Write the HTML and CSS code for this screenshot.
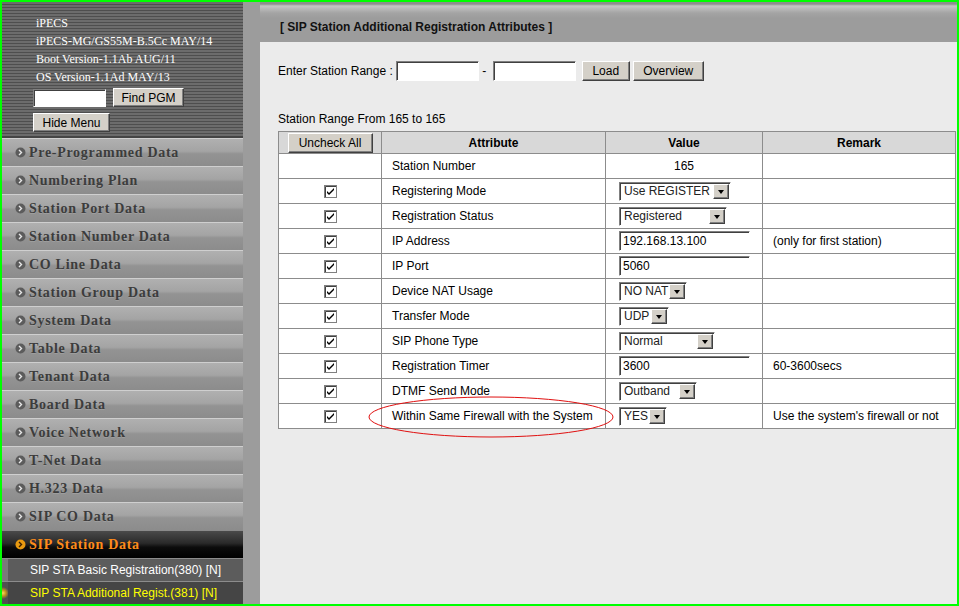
FILE: index.html
```html
<!DOCTYPE html>
<html>
<head>
<meta charset="utf-8">
<link rel="stylesheet" href="styles.css">
</head>
<body>
<div class="screen">
  <aside class="sidebar">
    <div class="info">
      <div class="info-line">iPECS</div>
      <div class="info-line">iPECS-MG/GS55M-B.5Cc MAY/14</div>
      <div class="info-line">Boot Version-1.1Ab AUG/11</div>
      <div class="info-line">OS Version-1.1Ad MAY/13</div>
      <div class="find-row">
        <input class="win-input find-input" type="text">
        <button class="win-btn find-btn">Find PGM</button>
      </div>
      <div class="hide-row">
        <button class="win-btn hide-btn">Hide Menu</button>
      </div>
    </div>
    <nav class="menu">
      <div class="menu-item"><svg class="bullet" viewBox="0 0 11 11"><circle cx="5.5" cy="5.5" r="5" fill="#5c5c5c"/><polyline points="4,3 6.5,5.5 4,8" fill="none" stroke="#e8e8e8" stroke-width="1.4"/></svg>Pre-Programmed Data</div>
      <div class="menu-item"><svg class="bullet" viewBox="0 0 11 11"><circle cx="5.5" cy="5.5" r="5" fill="#5c5c5c"/><polyline points="4,3 6.5,5.5 4,8" fill="none" stroke="#e8e8e8" stroke-width="1.4"/></svg>Numbering Plan</div>
      <div class="menu-item"><svg class="bullet" viewBox="0 0 11 11"><circle cx="5.5" cy="5.5" r="5" fill="#5c5c5c"/><polyline points="4,3 6.5,5.5 4,8" fill="none" stroke="#e8e8e8" stroke-width="1.4"/></svg>Station Port Data</div>
      <div class="menu-item"><svg class="bullet" viewBox="0 0 11 11"><circle cx="5.5" cy="5.5" r="5" fill="#5c5c5c"/><polyline points="4,3 6.5,5.5 4,8" fill="none" stroke="#e8e8e8" stroke-width="1.4"/></svg>Station Number Data</div>
      <div class="menu-item"><svg class="bullet" viewBox="0 0 11 11"><circle cx="5.5" cy="5.5" r="5" fill="#5c5c5c"/><polyline points="4,3 6.5,5.5 4,8" fill="none" stroke="#e8e8e8" stroke-width="1.4"/></svg>CO Line Data</div>
      <div class="menu-item"><svg class="bullet" viewBox="0 0 11 11"><circle cx="5.5" cy="5.5" r="5" fill="#5c5c5c"/><polyline points="4,3 6.5,5.5 4,8" fill="none" stroke="#e8e8e8" stroke-width="1.4"/></svg>Station Group Data</div>
      <div class="menu-item"><svg class="bullet" viewBox="0 0 11 11"><circle cx="5.5" cy="5.5" r="5" fill="#5c5c5c"/><polyline points="4,3 6.5,5.5 4,8" fill="none" stroke="#e8e8e8" stroke-width="1.4"/></svg>System Data</div>
      <div class="menu-item"><svg class="bullet" viewBox="0 0 11 11"><circle cx="5.5" cy="5.5" r="5" fill="#5c5c5c"/><polyline points="4,3 6.5,5.5 4,8" fill="none" stroke="#e8e8e8" stroke-width="1.4"/></svg>Table Data</div>
      <div class="menu-item"><svg class="bullet" viewBox="0 0 11 11"><circle cx="5.5" cy="5.5" r="5" fill="#5c5c5c"/><polyline points="4,3 6.5,5.5 4,8" fill="none" stroke="#e8e8e8" stroke-width="1.4"/></svg>Tenant Data</div>
      <div class="menu-item"><svg class="bullet" viewBox="0 0 11 11"><circle cx="5.5" cy="5.5" r="5" fill="#5c5c5c"/><polyline points="4,3 6.5,5.5 4,8" fill="none" stroke="#e8e8e8" stroke-width="1.4"/></svg>Board Data</div>
      <div class="menu-item"><svg class="bullet" viewBox="0 0 11 11"><circle cx="5.5" cy="5.5" r="5" fill="#5c5c5c"/><polyline points="4,3 6.5,5.5 4,8" fill="none" stroke="#e8e8e8" stroke-width="1.4"/></svg>Voice Network</div>
      <div class="menu-item"><svg class="bullet" viewBox="0 0 11 11"><circle cx="5.5" cy="5.5" r="5" fill="#5c5c5c"/><polyline points="4,3 6.5,5.5 4,8" fill="none" stroke="#e8e8e8" stroke-width="1.4"/></svg>T-Net Data</div>
      <div class="menu-item"><svg class="bullet" viewBox="0 0 11 11"><circle cx="5.5" cy="5.5" r="5" fill="#5c5c5c"/><polyline points="4,3 6.5,5.5 4,8" fill="none" stroke="#e8e8e8" stroke-width="1.4"/></svg>H.323 Data</div>
      <div class="menu-item"><svg class="bullet" viewBox="0 0 11 11"><circle cx="5.5" cy="5.5" r="5" fill="#5c5c5c"/><polyline points="4,3 6.5,5.5 4,8" fill="none" stroke="#e8e8e8" stroke-width="1.4"/></svg>SIP CO Data</div>
      <div class="menu-item active"><svg class="bullet" viewBox="0 0 11 11"><circle cx="5.5" cy="5.5" r="5" fill="#e89a10"/><polyline points="4,3 6.5,5.5 4,8" fill="none" stroke="#3a2000" stroke-width="1.4"/></svg>SIP Station Data</div>
      <div class="sub-item"><span class="sub-mark"></span><span class="sub-label">SIP STA Basic Registration(380) [N]</span></div>
      <div class="sub-item current"><span class="sub-mark"></span><span class="sub-label">SIP STA Additional Regist.(381) [N]</span></div>
    </nav>
  </aside>
  <div class="gutter"></div>
  <main class="main">
    <div class="titlebar">[ SIP Station Additional Registration Attributes ]</div>
    <div class="content">
      <div class="range-row">
        <span>Enter Station Range :</span>
        <input class="win-input range-input" type="text">
        <span class="dash">-</span>
        <input class="win-input range-input" type="text">
        <button class="win-btn load-btn">Load</button>
        <button class="win-btn overview-btn">Overview</button>
      </div>
      <div class="range-info">Station Range From 165 to 165</div>
      <table class="attr-table">
        <colgroup>
          <col class="c1"><col class="c2"><col class="c3"><col class="c4">
        </colgroup>
        <thead>
          <tr>
            <th><button class="win-btn uncheck-btn">Uncheck All</button></th>
            <th>Attribute</th>
            <th>Value</th>
            <th>Remark</th>
          </tr>
        </thead>
        <tbody>
          <tr>
            <td></td>
            <td class="attr">Station Number</td>
            <td class="val center">165</td>
            <td class="rem"></td>
          </tr>
          <tr>
            <td class="chk"><span class="cb"><svg viewBox="0 0 13 13"><rect x="0.5" y="0.5" width="12" height="12" fill="#fff" stroke="#808080"/><path d="M1.5 12V1.5H12" fill="none" stroke="#404040"/><path d="M3 6l2 2 5-5v2l-5 5-2-2z" fill="#000"/></svg></span></td>
            <td class="attr">Registering Mode</td>
            <td class="val"><span class="sel w112"><span class="sel-text">Use REGISTER</span><span class="sel-btn"></span></span></td>
            <td class="rem"></td>
          </tr>
          <tr>
            <td class="chk"><span class="cb"><svg viewBox="0 0 13 13"><rect x="0.5" y="0.5" width="12" height="12" fill="#fff" stroke="#808080"/><path d="M1.5 12V1.5H12" fill="none" stroke="#404040"/><path d="M3 6l2 2 5-5v2l-5 5-2-2z" fill="#000"/></svg></span></td>
            <td class="attr">Registration Status</td>
            <td class="val"><span class="sel w108"><span class="sel-text">Registered</span><span class="sel-btn"></span></span></td>
            <td class="rem"></td>
          </tr>
          <tr>
            <td class="chk"><span class="cb"><svg viewBox="0 0 13 13"><rect x="0.5" y="0.5" width="12" height="12" fill="#fff" stroke="#808080"/><path d="M1.5 12V1.5H12" fill="none" stroke="#404040"/><path d="M3 6l2 2 5-5v2l-5 5-2-2z" fill="#000"/></svg></span></td>
            <td class="attr">IP Address</td>
            <td class="val"><input class="win-input val-input" type="text" value="192.168.13.100"></td>
            <td class="rem">(only for first station)</td>
          </tr>
          <tr>
            <td class="chk"><span class="cb"><svg viewBox="0 0 13 13"><rect x="0.5" y="0.5" width="12" height="12" fill="#fff" stroke="#808080"/><path d="M1.5 12V1.5H12" fill="none" stroke="#404040"/><path d="M3 6l2 2 5-5v2l-5 5-2-2z" fill="#000"/></svg></span></td>
            <td class="attr">IP Port</td>
            <td class="val"><input class="win-input val-input" type="text" value="5060"></td>
            <td class="rem"></td>
          </tr>
          <tr>
            <td class="chk"><span class="cb"><svg viewBox="0 0 13 13"><rect x="0.5" y="0.5" width="12" height="12" fill="#fff" stroke="#808080"/><path d="M1.5 12V1.5H12" fill="none" stroke="#404040"/><path d="M3 6l2 2 5-5v2l-5 5-2-2z" fill="#000"/></svg></span></td>
            <td class="attr">Device NAT Usage</td>
            <td class="val"><span class="sel w68"><span class="sel-text">NO NAT</span><span class="sel-btn"></span></span></td>
            <td class="rem"></td>
          </tr>
          <tr>
            <td class="chk"><span class="cb"><svg viewBox="0 0 13 13"><rect x="0.5" y="0.5" width="12" height="12" fill="#fff" stroke="#808080"/><path d="M1.5 12V1.5H12" fill="none" stroke="#404040"/><path d="M3 6l2 2 5-5v2l-5 5-2-2z" fill="#000"/></svg></span></td>
            <td class="attr">Transfer Mode</td>
            <td class="val"><span class="sel w50"><span class="sel-text">UDP</span><span class="sel-btn"></span></span></td>
            <td class="rem"></td>
          </tr>
          <tr>
            <td class="chk"><span class="cb"><svg viewBox="0 0 13 13"><rect x="0.5" y="0.5" width="12" height="12" fill="#fff" stroke="#808080"/><path d="M1.5 12V1.5H12" fill="none" stroke="#404040"/><path d="M3 6l2 2 5-5v2l-5 5-2-2z" fill="#000"/></svg></span></td>
            <td class="attr">SIP Phone Type</td>
            <td class="val"><span class="sel w96"><span class="sel-text">Normal</span><span class="sel-btn"></span></span></td>
            <td class="rem"></td>
          </tr>
          <tr>
            <td class="chk"><span class="cb"><svg viewBox="0 0 13 13"><rect x="0.5" y="0.5" width="12" height="12" fill="#fff" stroke="#808080"/><path d="M1.5 12V1.5H12" fill="none" stroke="#404040"/><path d="M3 6l2 2 5-5v2l-5 5-2-2z" fill="#000"/></svg></span></td>
            <td class="attr">Registration Timer</td>
            <td class="val"><input class="win-input val-input" type="text" value="3600"></td>
            <td class="rem">60-3600secs</td>
          </tr>
          <tr>
            <td class="chk"><span class="cb"><svg viewBox="0 0 13 13"><rect x="0.5" y="0.5" width="12" height="12" fill="#fff" stroke="#808080"/><path d="M1.5 12V1.5H12" fill="none" stroke="#404040"/><path d="M3 6l2 2 5-5v2l-5 5-2-2z" fill="#000"/></svg></span></td>
            <td class="attr">DTMF Send Mode</td>
            <td class="val"><span class="sel w78"><span class="sel-text">Outband</span><span class="sel-btn"></span></span></td>
            <td class="rem"></td>
          </tr>
          <tr>
            <td class="chk"><span class="cb"><svg viewBox="0 0 13 13"><rect x="0.5" y="0.5" width="12" height="12" fill="#fff" stroke="#808080"/><path d="M1.5 12V1.5H12" fill="none" stroke="#404040"/><path d="M3 6l2 2 5-5v2l-5 5-2-2z" fill="#000"/></svg></span></td>
            <td class="attr circled">Within Same Firewall with the System<svg class="ellipse" viewBox="0 0 246 42"><ellipse cx="123" cy="21" rx="122" ry="20" fill="none" stroke="#e01010" stroke-width="1"/></svg></td>
            <td class="val"><span class="sel w48"><span class="sel-text">YES</span><span class="sel-btn"></span></span></td>
            <td class="rem">Use the system's firewall or not</td>
          </tr>
        </tbody>
      </table>
    </div>
  </main>
</div>
</body>
</html>
```

FILE: styles.css
```css
html, body {
  margin: 0;
  padding: 0;
  background: #ebebeb;
}

.screen {
  box-sizing: border-box;
  width: 959px;
  height: 606px;
  border: 2px solid #00ff00;
  display: flex;
  overflow: hidden;
  font-family: "Liberation Sans", Arial, sans-serif;
  font-size: 12px;
  color: #000;
}

/* ---------- Sidebar ---------- */
.sidebar {
  width: 241px;
  flex: none;
  display: flex;
  flex-direction: column;
  background: #3e3e3e;
}

.info {
  box-sizing: border-box;
  height: 136px;
  padding: 12px 0 0 31px;
  background: repeating-linear-gradient(to bottom, #6c6c6c 0, #6c6c6c 2px, #4e4e4e 2px, #4e4e4e 3px);
  border-bottom: 2px solid #454545;
  font-family: "Liberation Serif", "Times New Roman", serif;
  color: #fff;
}

.info-line {
  font-size: 12px;
  line-height: 18px;
  padding-left: 3px;
  white-space: nowrap;
}

.find-row {
  display: flex;
  align-items: center;
  gap: 7px;
  margin-top: 2px;
}

.hide-row {
  margin-top: 6px;
}

.win-btn {
  box-sizing: border-box;
  margin: 0;
  padding: 0;
  background: #d4d0c8;
  border: 1px solid;
  border-color: #ffffff #404040 #404040 #ffffff;
  box-shadow: inset -1px -1px 0 #808080;
  font-family: "Liberation Sans", Arial, sans-serif;
  font-size: 12px;
  color: #000;
  line-height: 1;
}

.win-input {
  box-sizing: border-box;
  margin: 0;
  padding: 0 3px;
  background: #fff;
  border: 1px solid;
  border-color: #808080 #ffffff #ffffff #808080;
  box-shadow: inset 1px 1px 0 #404040;
  font-family: "Liberation Sans", Arial, sans-serif;
  font-size: 12px;
  color: #000;
  outline: none;
}

.find-input {
  width: 73px;
  height: 18px;
}

.find-btn {
  width: 71px;
  height: 19px;
}

.hide-btn {
  width: 77px;
  height: 19px;
}

.menu {
  display: flex;
  flex-direction: column;
}

.menu-item {
  box-sizing: border-box;
  height: 28px;
  display: flex;
  align-items: center;
  padding-left: 13px;
  padding-top: 1px;
  border-top: 1px solid #cfcfcf;
  background: linear-gradient(to bottom, #b0b0b0 0%, #a4a4a4 45%, #939393 55%, #8c8c8c 100%);
  font-family: "Liberation Serif", "Times New Roman", serif;
  font-weight: bold;
  font-size: 14px;
  letter-spacing: 0.7px;
  color: #3c3c3c;
  text-shadow: 0 1px 0 rgba(255, 255, 255, 0.15);
  white-space: nowrap;
}

.bullet {
  width: 11px;
  height: 11px;
  margin-right: 3px;
  margin-top: -2px;
  flex: none;
}

.menu-item.active {
  border-top: 1px solid #8a8a8a;
  background: linear-gradient(to bottom, #4a4a4a 0%, #2a2a2a 45%, #0c0c0c 60%, #000 100%);
  color: #ff8c1a;
  text-shadow: none;
}

.sub-item {
  box-sizing: border-box;
  height: 23px;
  display: flex;
  border-top: 1px solid #8c8c8c;
  white-space: nowrap;
}

.sub-mark {
  width: 6px;
  flex: none;
  background: #7a7a7a;
}

.sub-label {
  flex: 1;
  display: flex;
  align-items: center;
  padding-left: 22px;
  background: #5c5c5c;
  color: #ffffff;
  font-size: 12px;
}

.sub-item.current .sub-mark {
  background: radial-gradient(circle at 1px 50%, #f4d860 0, #c09020 3px, #505050 6px);
}

.sub-item.current .sub-label {
  background: #454545;
  color: #ffff00;
}

.gutter {
  width: 17px;
  flex: none;
  background: #9c9c9c;
}

/* ---------- Main ---------- */
.main {
  flex: 1;
  display: flex;
  flex-direction: column;
  background: #ebebeb;
}

.titlebar {
  box-sizing: border-box;
  height: 40px;
  padding: 16px 0 0 20px;
  line-height: 18px;
  font-weight: bold;
  font-size: 12px;
  color: #111;
  background: linear-gradient(to bottom, #8e8e8e 0, #8e8e8e 2px, #c6c6c6 4px, #a4a4a4 11px, #9c9c9c 16px, #9c9c9c 100%);
}

.content {
  padding: 19px 0 0 18px;
}

.range-row {
  display: flex;
  align-items: center;
  height: 20px;
}

.range-input {
  width: 83px;
  height: 20px;
  margin-left: 3px;
}

.dash {
  width: 11px;
  text-align: center;
}

.load-btn {
  width: 48px;
  height: 20px;
  margin-left: 6px;
}

.overview-btn {
  width: 71px;
  height: 20px;
  margin-left: 3px;
}

.range-info {
  margin-top: 31px;
  line-height: 14px;
}

.attr-table {
  margin-top: 5px;
  width: 677px;
  border-collapse: collapse;
  table-layout: fixed;
  background: #fff;
}

.c1 { width: 103px; }
.c2 { width: 224px; }
.c3 { width: 157px; }
.c4 { width: 193px; }

.attr-table th,
.attr-table td {
  border: 1px solid #8c8c8c;
  padding: 0;
  font-size: 12px;
  line-height: 14px;
  white-space: nowrap;
  vertical-align: middle;
}

.attr-table th {
  height: 21px;
  background: #d8d8d8;
  font-weight: bold;
  text-align: center;
}

.attr-table td {
  height: 24px;
}

.uncheck-btn {
  width: 85px;
  height: 20px;
  display: block;
  margin: 0 auto;
}

.chk {
  text-align: center;
}

.cb {
  display: inline-block;
  width: 13px;
  height: 13px;
  vertical-align: middle;
}

.cb svg {
  display: block;
  width: 13px;
  height: 13px;
}

.attr {
  padding-left: 10px !important;
}

.circled {
  position: relative;
}

.ellipse {
  position: absolute;
  left: -14px;
  top: -8px;
  width: 246px;
  height: 42px;
  pointer-events: none;
}

.val {
  padding-left: 13px !important;
}

.val.center {
  padding-left: 0 !important;
  text-align: center;
}

.rem {
  padding-left: 10px !important;
}

.val-input {
  width: 131px;
  height: 20px;
  display: block;
}

.sel {
  box-sizing: border-box;
  height: 19px;
  display: flex;
  align-items: center;
  background: #fff;
  border: 1px solid;
  border-color: #808080 #ffffff #ffffff #808080;
  box-shadow: inset 1px 1px 0 #404040;
  padding: 1px 1px 1px 2px;
}

.sel-text {
  flex: 1;
  padding-left: 2px;
  font-size: 12px;
  color: #222;
  overflow: hidden;
}

.sel-btn {
  box-sizing: border-box;
  width: 16px;
  height: 15px;
  flex: none;
  background: #d4d0c8;
  border: 1px solid;
  border-color: #ffffff #404040 #404040 #ffffff;
  box-shadow: inset -1px -1px 0 #808080;
  position: relative;
}

.sel-btn::after {
  content: "";
  position: absolute;
  left: 4px;
  top: 5px;
  border-left: 3.5px solid transparent;
  border-right: 3.5px solid transparent;
  border-top: 4px solid #000;
}

.w112 { width: 112px; }
.w108 { width: 108px; }
.w96 { width: 96px; }
.w78 { width: 78px; }
.w68 { width: 68px; }
.w50 { width: 50px; }
.w48 { width: 48px; }
```
